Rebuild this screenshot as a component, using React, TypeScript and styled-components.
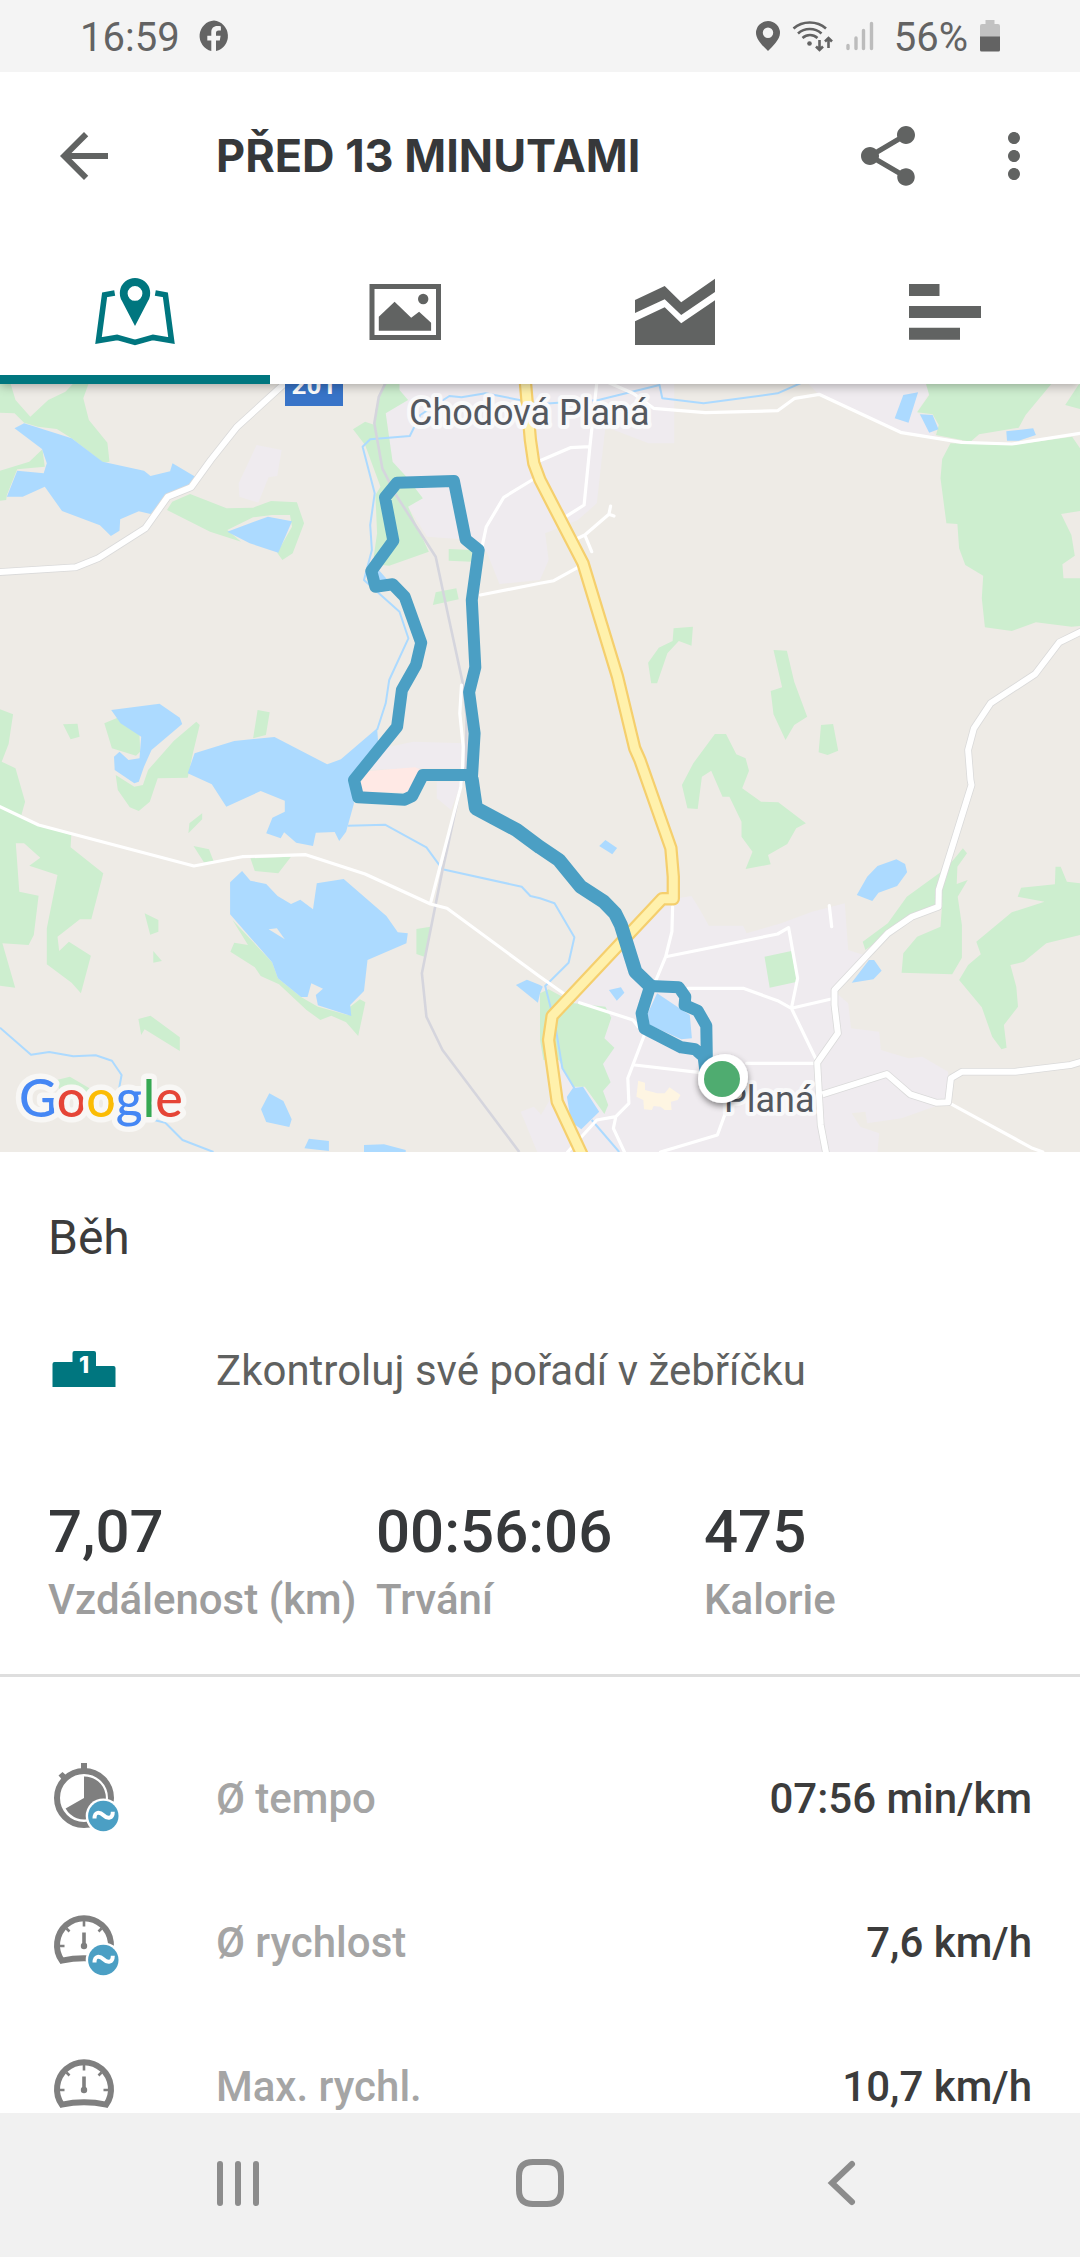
import React, { useState } from "react";
import styled, { createGlobalStyle } from "styled-components";
import { MdArrowBack, MdMoreVert, MdShare } from "react-icons/md";

const color = {
  teal: "#00767f",
  icon: "#616362",
  ink: "#36383a",
  body: "#5f6160",
  muted: "#9d9d9d",
  label: "#a5a5a5",
  gauge: "#7f7f7f",
  route: "#4b9fc4",
  land: "#eeebe6",
  wood: "#cdeecf",
  water: "#acdaff",
  urban: "#efebef",
};

const GlobalStyle = createGlobalStyle`
  *, *::before, *::after { box-sizing: border-box; }
  body { margin: 0; background: #fff; }
  button { border: 0; margin: 0; padding: 0; background: none; font: inherit; color: inherit; cursor: pointer; }
`;

const Screen = styled.div`
  display: flex;
  flex-direction: column;
  height: 100vh;
  overflow: hidden;
  background: #fff;
  color: ${color.ink};
  font-family: Roboto, "Liberation Sans", sans-serif;
`;

/* ---------- status bar ---------- */

const StatusBar = styled.div`
  position: relative;
  z-index: 2;
  display: flex;
  flex: none;
  align-items: center;
  justify-content: space-between;
  height: 72px;
  padding: 0 80px;
  background: #f4f4f4;
  color: #636363;
  font-size: 40px;
  line-height: 48px;
`;

const StatusGroup = styled.div<{ $gap: number }>`
  display: flex;
  align-items: center;
  gap: ${(p) => p.$gap}px;
`;

const StatusText = styled.span`
  padding-top: 4px;
`;

const Glyph = styled.svg`
  display: block;
  flex: none;
`;

/* ---------- app bar and tabs ---------- */

const AppBar = styled.header`
  position: relative;
  z-index: 1;
  flex: none;
  background: #fff;
  box-shadow: 0 2px 10px rgba(0, 0, 0, 0.3);
`;

const Toolbar = styled.div`
  display: flex;
  align-items: center;
  height: 168px;
  padding: 0 30px 0 48px;
`;

const IconButton = styled.button`
  display: flex;
  flex: none;
  color: ${color.icon};
  font-size: 72px;
`;

const Title = styled.h1`
  flex: 1;
  margin: 0 0 0 96px;
  font-family: Inter, Roboto, sans-serif;
  font-size: 45px;
  font-weight: 700;
  line-height: 56px;
  white-space: nowrap;
`;

const Actions = styled.div`
  display: flex;
  gap: 54px;
`;

const Tabs = styled.div`
  display: grid;
  grid-template-columns: repeat(4, 1fr);
  height: 144px;
`;

const Tab = styled.button<{ $active: boolean }>`
  display: flex;
  align-items: center;
  justify-content: center;
  color: ${(p) => (p.$active ? color.teal : color.icon)};
  box-shadow: ${(p) => (p.$active ? `inset 0 -9px ${color.teal}` : "none")};
`;

/* ---------- content ---------- */

const Content = styled.main`
  flex: 1;
  min-height: 0;
  overflow-y: auto;
  scrollbar-width: none;
`;

const MapCanvas = styled.svg`
  display: block;
  width: 100%;
  height: auto;
  background: ${color.land};
`;

const Summary = styled.section`
  padding: 50px 48px;
  border-bottom: 3px solid #dedede;
`;

const Sport = styled.h2`
  margin: 0;
  font-size: 48px;
  font-weight: 400;
  line-height: 72px;
  color: #3c3c3c;
`;

const Leaderboard = styled.button`
  display: flex;
  align-items: center;
  gap: 96px;
  width: 100%;
  height: 96px;
  margin-top: 48px;
  color: ${color.body};
  font-size: 42px;
  text-align: left;
`;

const Totals = styled.dl`
  display: grid;
  grid-template-columns: repeat(3, 1fr);
  margin: 78px 0 0;
  font-weight: 500;
`;

const Total = styled.div`
  display: flex;
  flex-direction: column-reverse;
  gap: 8px;
  white-space: nowrap;
`;

const TotalLabel = styled.dt`
  color: ${color.muted};
  font-size: 42px;
  line-height: 48px;
`;

const TotalValue = styled.dd`
  margin: 0;
  font-size: 60px;
  line-height: 72px;
`;

const Metrics = styled.dl`
  margin: 0;
  padding: 50px 48px;
`;

const Metric = styled.div`
  display: flex;
  align-items: center;
  height: 144px;
  font-size: 42px;
  font-weight: 500;
  line-height: 48px;
`;

const MetricName = styled.dt`
  margin-left: 96px;
  color: ${color.label};
`;

const MetricValue = styled.dd`
  margin: 0 0 0 auto;
  color: #3c3c3c;
`;

/* ---------- system navigation ---------- */

const SystemNav = styled.nav`
  display: grid;
  flex: none;
  grid-template-columns: repeat(3, 1fr);
  height: 144px;
  padding: 0 87px 4px;
  background: #f1f1f1;
`;

const NavButton = styled.button`
  display: flex;
  align-items: center;
  justify-content: center;
`;

/* ---------- map geometry ---------- */

/* Vector data comes in four tiles; coordinates are local to a tile. */
const tiles: Record<string, [number, number]> = {
  A: [0, -4],
  B: [540, -4],
  C: [0, 376],
  D: [540, 376],
};
const TILE_X = 540 / 1568;
const TILE_Y = 1 / 3;

function project(source: string, close = false): string {
  let tile = tiles.A;
  const points: string[] = [];
  source.split(/\s+/).forEach((token) => {
    if (tiles[token]) {
      tile = tiles[token];
    } else if (token) {
      const [x, y] = token.split(",").map(Number);
      points.push(
        `${(tile[0] + x * TILE_X).toFixed(1)} ${(tile[1] + y * TILE_Y).toFixed(1)}`
      );
    }
  });
  return `M${points.join("L")}${close ? "Z" : ""}`;
}

const area = (list: string[]) => list.map((s) => project(s, true)).join("");
const lines = (list: string[]) => list.map((s) => project(s)).join("");

const urban = area([
  "A 1120,12 B 390,12 390,190 315,190 190,140 165,370 110,420 15,460 25,540 0,600 A 1450,612 1415,520 1400,500 1370,480 1240,470 1185,380 1140,245 1120,100",
  "B 780,12 1120,12 1130,40 1095,95 1150,168 1050,158 810,45",
  "A 745,195 818,210 805,288 780,292 750,368 695,350 693,310",
  "A 1110,1105 1200,1085 1350,1090 1350,1165 C 1205,25 1070,30",
  "C 1268,65 1340,65 1310,150 1268,115",
  "D 400,415 440,408 465,450 490,497 590,497 600,520 700,490 790,455 885,430 895,570 940,585 850,690 895,730 903,805 985,815 990,870 1070,895 1110,890 1185,935 1185,1025 1050,1075 950,1090 945,1055 905,1060 930,1100 985,1120 980,1176 60,1176 0,1070 40,1000 40,760 310,480",
  "C 1512,1055 1550,1040 1568,1060 D 60,1176 C 1560,1176",
]);

const woods = area([
  "A 0,8 30,8 45,60 88,110 140,60 190,35 215,8 258,8 242,55 258,120 312,188 318,245 300,248 208,175 165,147 110,140 70,128 42,100 0,98",
  "A 0,272 85,245 123,208 130,260 50,268 20,345 18,360 0,362",
  "A 485,390 500,365 552,342 658,385 735,383 787,363 862,367 883,430 850,520 820,540 805,518 848,440 842,405 790,405 735,412 660,450 700,485 610,455",
  "A 1115,8 1160,8 1160,30 1185,60 1120,100 1140,245 1180,290 1228,355 1185,380 1245,515 1130,557 1110,555 1085,530 1095,460 1090,345 1105,320 1060,195 1025,148 1060,125 1088,135 1090,90",
  "A 1303,507 1370,510 1370,545 1303,542",
  "A 1265,637 1325,625 1332,658 1257,675",
  "A 0,988 38,1003 25,1092 5,1145 45,1165 C 73,125 62,165 110,195 207,225 205,262 300,340 265,478 232,478 167,530 172,573 200,545 264,587 235,700 208,668 136,613 136,505 167,345 85,317 117,293 70,250 46,250 56,395 112,407 98,525 83,555 7,550 44,683 0,677",
  "A 183,1033 225,1031 231,1070 205,1078",
  "A 303,1030 345,1012 405,1065 407,1115 395,1127 325,1105",
  "A 570,1025 580,1035 560,1120 C 545,53 458,55 435,125 403,153 377,142 342,90 336,45 390,80 415,75 A 430,1170 505,1082",
  "A 748,990 783,997 772,1065 735,1075",
  "B 1120,8 1488,8 1410,105 1390,143 1275,163 1250,185 1150,165 1158,135 1140,103 1095,97 1130,45",
  "B 1192,190 1370,195 1545,170 1568,205 1568,393 1513,402 1543,465 1553,527 1517,553 1520,595 1568,595 1568,738 1543,740 1440,727 1370,753 1292,742 1283,655 1287,587 1235,555 1217,505 1212,432 1180,430 1163,295 1168,237",
  "B 1568,8 1568,87 1525,75 1560,20",
  "B 388,745 444,740 440,797 403,783 370,820 340,910 323,910 314,848 345,803 385,783",
  "B 678,810 717,812 738,905 776,1010 738,1035 713,1080 678,1003 670,933 703,922",
  "B 816,1035 851,1032 866,1112 835,1125 809,1117",
  "B 508,1062 540,1062 570,1123 597,1135 607,1172 D 587,85 642,125 692,127 772,190 744,205 718,252 662,285 670,313 597,327 617,275 585,230 585,185 550,110 530,110 497,32 470,50 458,147 428,145 412,75 B 445,1150",
  "C 587,160 587,178 547,220 550,190",
  "C 562,258 607,268 620,303 592,307",
  "C 727,295 845,290 808,340 740,333",
  "C 420,460 460,480 460,515 436,524",
  "C 445,573 470,603 445,608",
  "C 402,777 437,767 522,832 522,873 420,808 410,825",
  "C 1209,507 1250,500 1232,590 1209,582",
  "C 165,960 203,950 260,985 250,1020 180,1020",
  "C 675,480 720,555 680,548 669,575 740,622 757,648 810,673 890,750 930,780 962,767 1005,787 1040,828 1061,727 1045,718 1017,740 1010,765 923,740 874,711 807,655 790,607",
  "D 25,688 100,730 190,740 207,773 187,835 216,863 183,912 205,967 183,993 198,1035 187,1062 130,980 95,980 55,900 10,900 0,840 0,700",
  "D 652,590 730,573 747,665 667,683",
  "D 1228,265 1240,280 1212,320 1210,372 1242,360 1213,410 1225,495 1225,593 1197,643 1050,638 1055,580 1095,530 1163,500 1168,430 1080,470 1010,520 945,570 937,545 1010,490 1065,410 1165,335 1200,300",
  "D 1497,320 1512,320 1530,365 1568,370 1568,525 1470,550 1405,605 1366,615 1383,680 1388,740 1347,795 1355,863 1340,868 1313,830 1283,742 1217,660 1243,615 1280,583 1267,545 1370,457 1465,425 1387,410 1397,383 1495,373",
]);

const lakes = area([
  "A 42,145 70,130 208,175 298,245 418,272 437,288 494,274 501,250 567,290 555,325 487,347 437,402 403,394 349,418 347,452 322,468 290,436 180,393 130,320 66,350 20,350 50,272 127,280 136,250 122,207",
  "A 660,455 778,410 848,424 808,518 725,490",
  "A 1100,570 1130,605 1085,605",
  "A 323,990 463,971 522,1013 529,1032 440,1110 418,1160 C 403,65 390,70 333,30 A 331,1130 347,1115 373,1140 405,1135 410,1070 350,1030",
  "A 565,1120 680,1083 797,1071 950,1153 990,1138 1095,1045 1098,1085 C 1015,60 1028,130 1005,215 985,243 972,216 917,218 909,258 860,248 825,217 815,235 773,220 791,173 827,155 827,122 757,93 657,140 615,73 545,40",
  "B 1055,45 1098,37 1070,128 1030,115",
  "B 1103,103 1140,105 1157,148 1130,158",
  "B 1354,154 1432,145 1440,165 1390,182 1356,182",
  "C 668,367 703,333 727,362 773,372 806,408 845,432 872,419 909,448 920,370 998,357 1122,468 1155,517 1184,520 1180,550 1067,600 1057,693 1017,735 1020,768 923,736 917,705 938,686 904,670 893,711 874,711 807,655 790,607 668,463",
  "C 782,1000 823,1023 847,1078 840,1101 773,1086 758,1048",
  "C 897,1136 955,1143 955,1173 884,1165",
  "C 1057,1155 1115,1153 1178,1170 1178,1176 1057,1176",
  "C 1498,675 1530,659 1568,675 D 8,680 0,700 C 1562,728",
  "D 172,258 190,240 224,264 210,283",
  "D 920,405 950,350 980,318 1035,298 1060,312 1066,337 1037,378 983,398 965,423",
  "D 955,600 970,600 992,632 968,658 905,668",
  "D 200,690 235,682 245,698 223,722",
  "D 340,700 405,745 435,765 441,835 410,838 318,795 313,760",
  "D 78,1010 95,985 125,980 172,1055 120,1108 90,1085",
]);

const streams = lines([
  "B 760,8 690,40 475,70 355,55 347,15 170,60 0,72 A 1410,40 1340,52 1305,48 1220,105 1190,168 1075,178 1053,200 1088,340 1075,435 1080,510 1057,600 1160,695 1186,775 1130,900 1120,970 1095,1050",
  "C 0,803 90,884 143,876 213,889 278,886 325,902 353,945 345,990 430,1020 447,1080 480,1088 530,1140 620,1176",
  "C 1010,197 1118,194 1238,262 1285,328 1515,380 1540,408 1568,415 D 42,430 100,532 83,608 15,678 45,800 65,925 100,985",
  "D 150,1080 230,1176",
]);

const railway = lines([
  "A 1120,8 1100,50 1087,130 1110,265 1150,345 1265,530 1300,700 1345,915 1355,1010 1353,1160 C 1335,90 1300,260 1285,330 1225,640 1238,770 1285,870 1508,1176",
]);

const lanes = lines([
  "A 1340,915 1335,1000 1345,1100 1343,1160 C 1338,80 1250,430",
  "A 1395,645 1568,610 B 40,602 110,562",
  "A 1400,500 1412,440 1463,352 1545,300",
  "B 0,242 88,203 145,200",
  "B 165,8 145,200 128,375 75,410",
  "B 110,475 130,465 200,403 205,378",
  "B 200,403 215,408",
  "B 130,465 150,515",
  "B 200,8 270,40 330,85 480,98 690,92 740,55 810,43 1050,158 1225,187 1370,192 1568,160",
  "C 0,140 112,195 563,318 703,290 888,284 1060,342 1250,432 1298,445 1568,650 D 75,705",
  "D 115,728 270,780 285,800",
  "D 385,440 383,515 365,590 325,690",
  "D 365,590 690,522 722,503 748,655 730,745 855,715",
  "D 840,437 847,500",
  "D 430,685 590,685 690,722 730,745 805,905",
  "D 600,910 800,910",
  "D 275,915 460,937",
  "D 305,820 255,955 258,1030 220,1070 165,1080 80,1176",
  "D 220,1070 213,1105 245,1176",
  "D 545,1040 515,1125 350,1176",
  "D 1185,1027 1430,1165 1460,1176",
]);

const roads = lines([
  "A -10,577 220,562 285,535 422,445 487,350 555,322 612,240 687,142 835,2",
  "B 1580,750 1508,787 1438,882 1308,970 1260,1045 1243,1110 1250,1200 D 1253,75 1158,390 1157,440 1080,470 1010,520 855,690 855,735 865,820 805,908 815,1095 832,1186",
  "D 820,1003 1007,942 1075,1003 1150,1028 1185,1027 1193,955 1225,935 1380,935 1540,915 1580,903",
]);

const highway = lines([
  "A 1525,0 1540,180 1550,250 B 0,300 125,550 225,890 275,1105 D 290,0 380,265 387,350 387,416 355,416 35,768 25,840 50,1025 125,1190",
]);

const trackShared = lines([
  "C 1370,60 1382,145 1500,210 1568,262 D 55,300 118,380 185,425 218,460 235,495 277,635 320,678",
]);

const track = lines([
  "D 485,925 483,797 458,752 420,735 422,710 403,682 320,678",
  "D 320,678 295,760 303,805 410,862 450,868 475,890 480,930",
  "C 1370,60 A 1378,1060 1362,937 1380,862 1370,660 1390,510 1352,478 1318,303 1153,308 1118,352 1142,482 1078,573 1090,620 1140,613 1175,650 1223,788 1208,855 1167,930 1153,1040 C 1028,60 1040,112 1175,119 1197,108 1228,45 1370,45",
]);

const googleLetters: [string, string][] = [
  ["G", "#4587f4"],
  ["o", "#e54537"],
  ["o", "#fbbc05"],
  ["g", "#4587f4"],
  ["l", "#36a853"],
  ["e", "#e54537"],
];

function RouteMap() {
  return (
    <MapCanvas viewBox="0 0 1080 768" role="img" aria-label="Mapa trasy">
      <defs>
        <filter id="lift" x="-30%" y="-30%" width="160%" height="170%">
          <feDropShadow dx="0" dy="3" stdDeviation="3" floodOpacity="0.45" />
        </filter>
      </defs>
      <path d={urban} fill={color.urban} />
      <path d={woods} fill={color.wood} />
      <path d={lakes} fill={color.water} />
      <path d={area(["C 780,508 804,505 827,538"])} fill={color.land} />
      <path
        d={area(["C 1048,65 1070,33 1205,22 1225,30 1190,98 1050,95"])}
        fill="#ffe9e5"
      />
      <path
        d={area([
          "D 285,962 305,968 305,990 340,1000 362,1000 376,982 408,1005 400,1020 380,1025 382,1050 362,1050 350,1040 330,1038 325,1050 302,1048 300,1020 280,1010",
        ])}
        fill="#fef5e2"
      />
      <g fill="none" strokeLinejoin="round">
        <path d={streams} stroke={color.water} strokeWidth="2" />
        <path d={railway} stroke="#d5d5dd" strokeWidth="2.6" />
        <path d={lanes} stroke="#fff" strokeWidth="3.2" strokeLinecap="round" />
        <path d={roads} stroke="#dadada" strokeWidth="7.6" />
        <path d={roads} stroke="#fff" strokeWidth="6" />
        <path d={highway} stroke="#f5cf6d" strokeWidth="13.4" />
        <path d={highway} stroke="#fff1ac" strokeWidth="9" />
      </g>

      <rect x="285" y="-30" width="58" height="52" fill="#3874c8" />
      <text x="314" y="10" textAnchor="middle" fontSize="26" fontWeight="700" fill="#fff">
        201
      </text>
      <g
        fontSize="36"
        fill="#54585f"
        stroke="#f9f9fa"
        strokeWidth="8"
        strokeLinejoin="round"
        paintOrder="stroke"
      >
        <text x="409" y="41">Chodová Planá</text>
        <text x="724" y="728">Planá</text>
      </g>

      <g fill="none" stroke={color.route} strokeLinejoin="round" strokeLinecap="round">
        <path d={trackShared} strokeWidth="14" />
        <path d={track} strokeWidth="12" />
      </g>
      <g filter="url(#lift)">
        <circle cx="725" cy="693" r="23" fill="#fff" />
        <circle cx="722" cy="695" r="24" fill="#fff" />
      </g>
      <circle cx="722" cy="695" r="18" fill="#4fac70" />

      <text
        x="19"
        y="733"
        fontFamily="Lato, sans-serif"
        fontSize="52"
        fontWeight="500"
        stroke="#f8f7f5"
        strokeWidth="11"
        strokeLinejoin="round"
        paintOrder="stroke"
      >
        {googleLetters.map(([letter, fill], i) => (
          <tspan key={i} fill={fill}>
            {letter}
          </tspan>
        ))}
      </text>
    </MapCanvas>
  );
}

/* ---------- icons ---------- */

const FacebookIcon = () => (
  <Glyph width="32" height="32" viewBox="0 0 32 32" fill="currentColor">
    <path d="M16 .5A15.500 15.500 0 0 0 13.300 31V20.500H9.300V15.800H13.300V12.300C13.300 8.200 15.700 6 19.300 6c1.500 0 3 .2 3.600.4V10.600H20.600C18.700 10.600 18 11.700 18 13v2.800h4.600l-.8 4.700H18V31A15.500 15.500 0 0 0 16 .5Z" />
  </Glyph>
);

const PlaceIcon = () => (
  <Glyph width="24" height="32" viewBox="0 0 24 32" fill="currentColor">
    <path
      fillRule="evenodd"
      d="M12 1A12 12 0 0 0 0 13c0 6.500 7.500 13.500 12 18 4.500-4.500 12-11.500 12-18A12 12 0 0 0 12 1Zm0 6.500a5.200 5.200 0 1 1 0 10.400 5.200 5.200 0 0 1 0-10.400Z"
    />
  </Glyph>
);

const WifiIcon = () => (
  <Glyph width="42" height="32" viewBox="0 0 42 32" fill="none" stroke="currentColor" strokeWidth="2.600">
    <path d="M1.500 8.500C10.500 .5 25 .5 34 8.500M6 13.500C12.500 7.500 23 7.500 29.500 13.500M10.500 18C15 14 21 14 25.500 18" />
    <circle cx="17.500" cy="23.500" r="2.300" fill="currentColor" stroke="none" />
    <path d="M27.500 20V30M24 26.500l3.500 3.500 3.500-3.500M36.500 28V18M33 21.500l3.500-3.500 3.500 3.500" />
  </Glyph>
);

const SignalIcon = () => (
  <Glyph width="28" height="32" viewBox="0 0 28 32" stroke="#bcbcbc" strokeWidth="3.400" strokeLinecap="round">
    <path d="M2 25.500V28.500M10 18V28.500M17.500 10.500V28.500M25.500 3.500V28.500" />
  </Glyph>
);

const BatteryIcon = () => (
  <Glyph width="20" height="32" viewBox="0 0 20 32">
    <path d="M5.500 0h9v4H18a2 2 0 0 1 2 2V17H0V6A2 2 0 0 1 2 4H5.500Z" fill="#c2c2c2" />
    <path d="M0 16.500H20V30a1.500 1.500 0 0 1-1.500 1.500h-17A1.500 1.500 0 0 1 0 30Z" fill="currentColor" />
  </Glyph>
);

const TabIcon: React.FC<{ children: React.ReactNode }> = ({ children }) => (
  <Glyph width="96" height="96" viewBox="0 0 96 96" fill="currentColor">
    {children}
  </Glyph>
);

const tabs = [
  {
    label: "Mapa",
    art: (
      <>
        <path
          d="M27.700 29 17.600 30.800 11.500 76.600 30 73.400 48 78.400 66 73.400 84.500 76.600 78.400 30.800 68.300 29"
          fill="none"
          stroke="currentColor"
          strokeWidth="5.600"
        />
        <path
          fillRule="evenodd"
          d="M48 62 35 37A15.200 15.200 0 1 1 61 37ZM48 22a7.400 7.400 0 1 0 0 14.800 7.400 7.400 0 0 0 0-14.800Z"
        />
      </>
    ),
  },
  {
    label: "Fotky",
    art: (
      <>
        <rect x="15" y="22.500" width="66.500" height="51" fill="none" stroke="currentColor" strokeWidth="5" />
        <circle cx="66.200" cy="35" r="5.200" />
        <path d="M21.800 52.700 37.600 37.700 54.200 53.700 62.100 47.700 74.100 58.700V66.700H21.800Z" />
      </>
    ),
  },
  {
    label: "Grafy",
    art: (
      <>
        <path d="M8 36 37.700 22 54.200 38.300 88 14.700V28L54.200 51 37.700 35.300 8 49Z" />
        <path d="M8 57.300 37.700 43.300 54.200 59.300 88 36.300V81H8Z" />
      </>
    ),
  },
  {
    label: "Mezičasy",
    art: <path d="M12 20H42.500V32H12ZM12 42H84V54H12ZM12 63.700H63V75.700H12Z" />,
  },
];

const PodiumIcon = () => (
  <Glyph width="72" height="72" viewBox="0 0 72 72">
    <path
      d="M4.500 53V30a2 2 0 0 1 2-2H24.500V19a2 2 0 0 1 2-2H46a2 2 0 0 1 2 2V32H65.500a2 2 0 0 1 2 2V53Z"
      fill={color.teal}
    />
    <text x="36" y="39" textAnchor="middle" fontFamily="Inter, sans-serif" fontSize="23" fontWeight="800" fill="#fff">
      1
    </text>
  </Glyph>
);

const AverageBadge = () => (
  <>
    <circle cx="55.300" cy="53" r="17.600" fill="#fff" />
    <circle cx="55.300" cy="53" r="15.200" fill={color.route} />
    <path
      d="M46.500 55.600C46.500 48.500 51.500 48.500 55.500 52.300 59.500 56.100 64.800 56 64.800 48.800"
      fill="none"
      stroke="#fff"
      strokeWidth="4"
    />
  </>
);

const StopwatchIcon = () => (
  <Glyph width="72" height="72" viewBox="0 0 72 72">
    <circle cx="36" cy="35" r="27" fill="none" stroke={color.gauge} strokeWidth="6" />
    <path d="M33 0h6v7h-6ZM10.500 12.500l4-3.600 5 4.600-4.500 4Z" fill={color.gauge} />
    <path d="M36 35V13.500A21.500 21.500 0 1 1 17.600 45.500Z" fill={color.gauge} />
    <AverageBadge />
  </Glyph>
);

const GaugeIcon: React.FC<{ average?: boolean }> = ({ average }) => (
  <Glyph width="72" height="72" viewBox="0 0 72 72" fill="none" stroke={color.gauge}>
    <path d="M13.800 53.600A27 27 0 1 1 58.200 53.600Q36 49 13.800 53.600Z" strokeWidth="6" />
    <path d="M36 13v6.500M12 39h4.500M55.500 39H60M18.500 21.500l3 3M53.500 21.500l-3 3" strokeWidth="2.600" />
    <path d="M36 25.500V39" strokeWidth="3.600" />
    <circle cx="36" cy="39" r="3.200" fill={color.gauge} stroke="none" />
    {average && (
      <g stroke="none">
        <AverageBadge />
      </g>
    )}
  </Glyph>
);

const navIcons = [
  { label: "Poslední aplikace", d: "M6 6V45M24 6V45M42 6V45" },
  {
    label: "Domů",
    d: "M17 4H31Q45 4 45 18V32Q45 46 31 46H17Q3 46 3 32V18Q3 4 17 4Z",
  },
  { label: "Zpět", d: "M34 6 14 25 34 44" },
];

/* ---------- page ---------- */

const totals = [
  { label: "Vzdálenost (km)", value: "7,07" },
  { label: "Trvání", value: "00:56:06" },
  { label: "Kalorie", value: "475" },
];

const metrics = [
  { label: "Ø tempo", value: "07:56 min/km", icon: <StopwatchIcon /> },
  { label: "Ø rychlost", value: "7,6 km/h", icon: <GaugeIcon average /> },
  { label: "Max. rychl.", value: "10,7 km/h", icon: <GaugeIcon /> },
];

export default function App() {
  const [active, setActive] = useState(0);

  return (
    <Screen>
      <GlobalStyle />
      <StatusBar>
        <StatusGroup $gap={18}>
          <StatusText>16:59</StatusText>
          <FacebookIcon />
        </StatusGroup>
        <StatusGroup $gap={20}>
          <StatusGroup $gap={12}>
            <PlaceIcon />
            <WifiIcon />
            <SignalIcon />
          </StatusGroup>
          <StatusGroup $gap={12}>
            <StatusText>56%</StatusText>
            <BatteryIcon />
          </StatusGroup>
        </StatusGroup>
      </StatusBar>

      <AppBar>
        <Toolbar>
          <IconButton aria-label="Zpět">
            <MdArrowBack />
          </IconButton>
          <Title>PŘED 13 MINUTAMI</Title>
          <Actions>
            <IconButton aria-label="Sdílet">
              <MdShare />
            </IconButton>
            <IconButton aria-label="Další možnosti">
              <MdMoreVert />
            </IconButton>
          </Actions>
        </Toolbar>
        <Tabs role="tablist">
          {tabs.map((tab, i) => (
            <Tab
              key={tab.label}
              role="tab"
              aria-label={tab.label}
              aria-selected={i === active}
              $active={i === active}
              onClick={() => setActive(i)}
            >
              <TabIcon>{tab.art}</TabIcon>
            </Tab>
          ))}
        </Tabs>
      </AppBar>

      <Content>
        <RouteMap />
        <Summary>
          <Sport>Běh</Sport>
          <Leaderboard>
            <PodiumIcon />
            Zkontroluj své pořadí v žebříčku
          </Leaderboard>
          <Totals>
            {totals.map((t) => (
              <Total key={t.label}>
                <TotalLabel>{t.label}</TotalLabel>
                <TotalValue>{t.value}</TotalValue>
              </Total>
            ))}
          </Totals>
        </Summary>
        <Metrics>
          {metrics.map((m) => (
            <Metric key={m.label}>
              {m.icon}
              <MetricName>{m.label}</MetricName>
              <MetricValue>{m.value}</MetricValue>
            </Metric>
          ))}
        </Metrics>
      </Content>

      <SystemNav aria-label="Systémová navigace">
        {navIcons.map((icon) => (
          <NavButton key={icon.label} aria-label={icon.label}>
            <Glyph
              width="48"
              height="50"
              viewBox="0 0 48 50"
              fill="none"
              stroke="#8c8c8c"
              strokeWidth="6"
              strokeLinecap="round"
            >
              <path d={icon.d} />
            </Glyph>
          </NavButton>
        ))}
      </SystemNav>
    </Screen>
  );
}
